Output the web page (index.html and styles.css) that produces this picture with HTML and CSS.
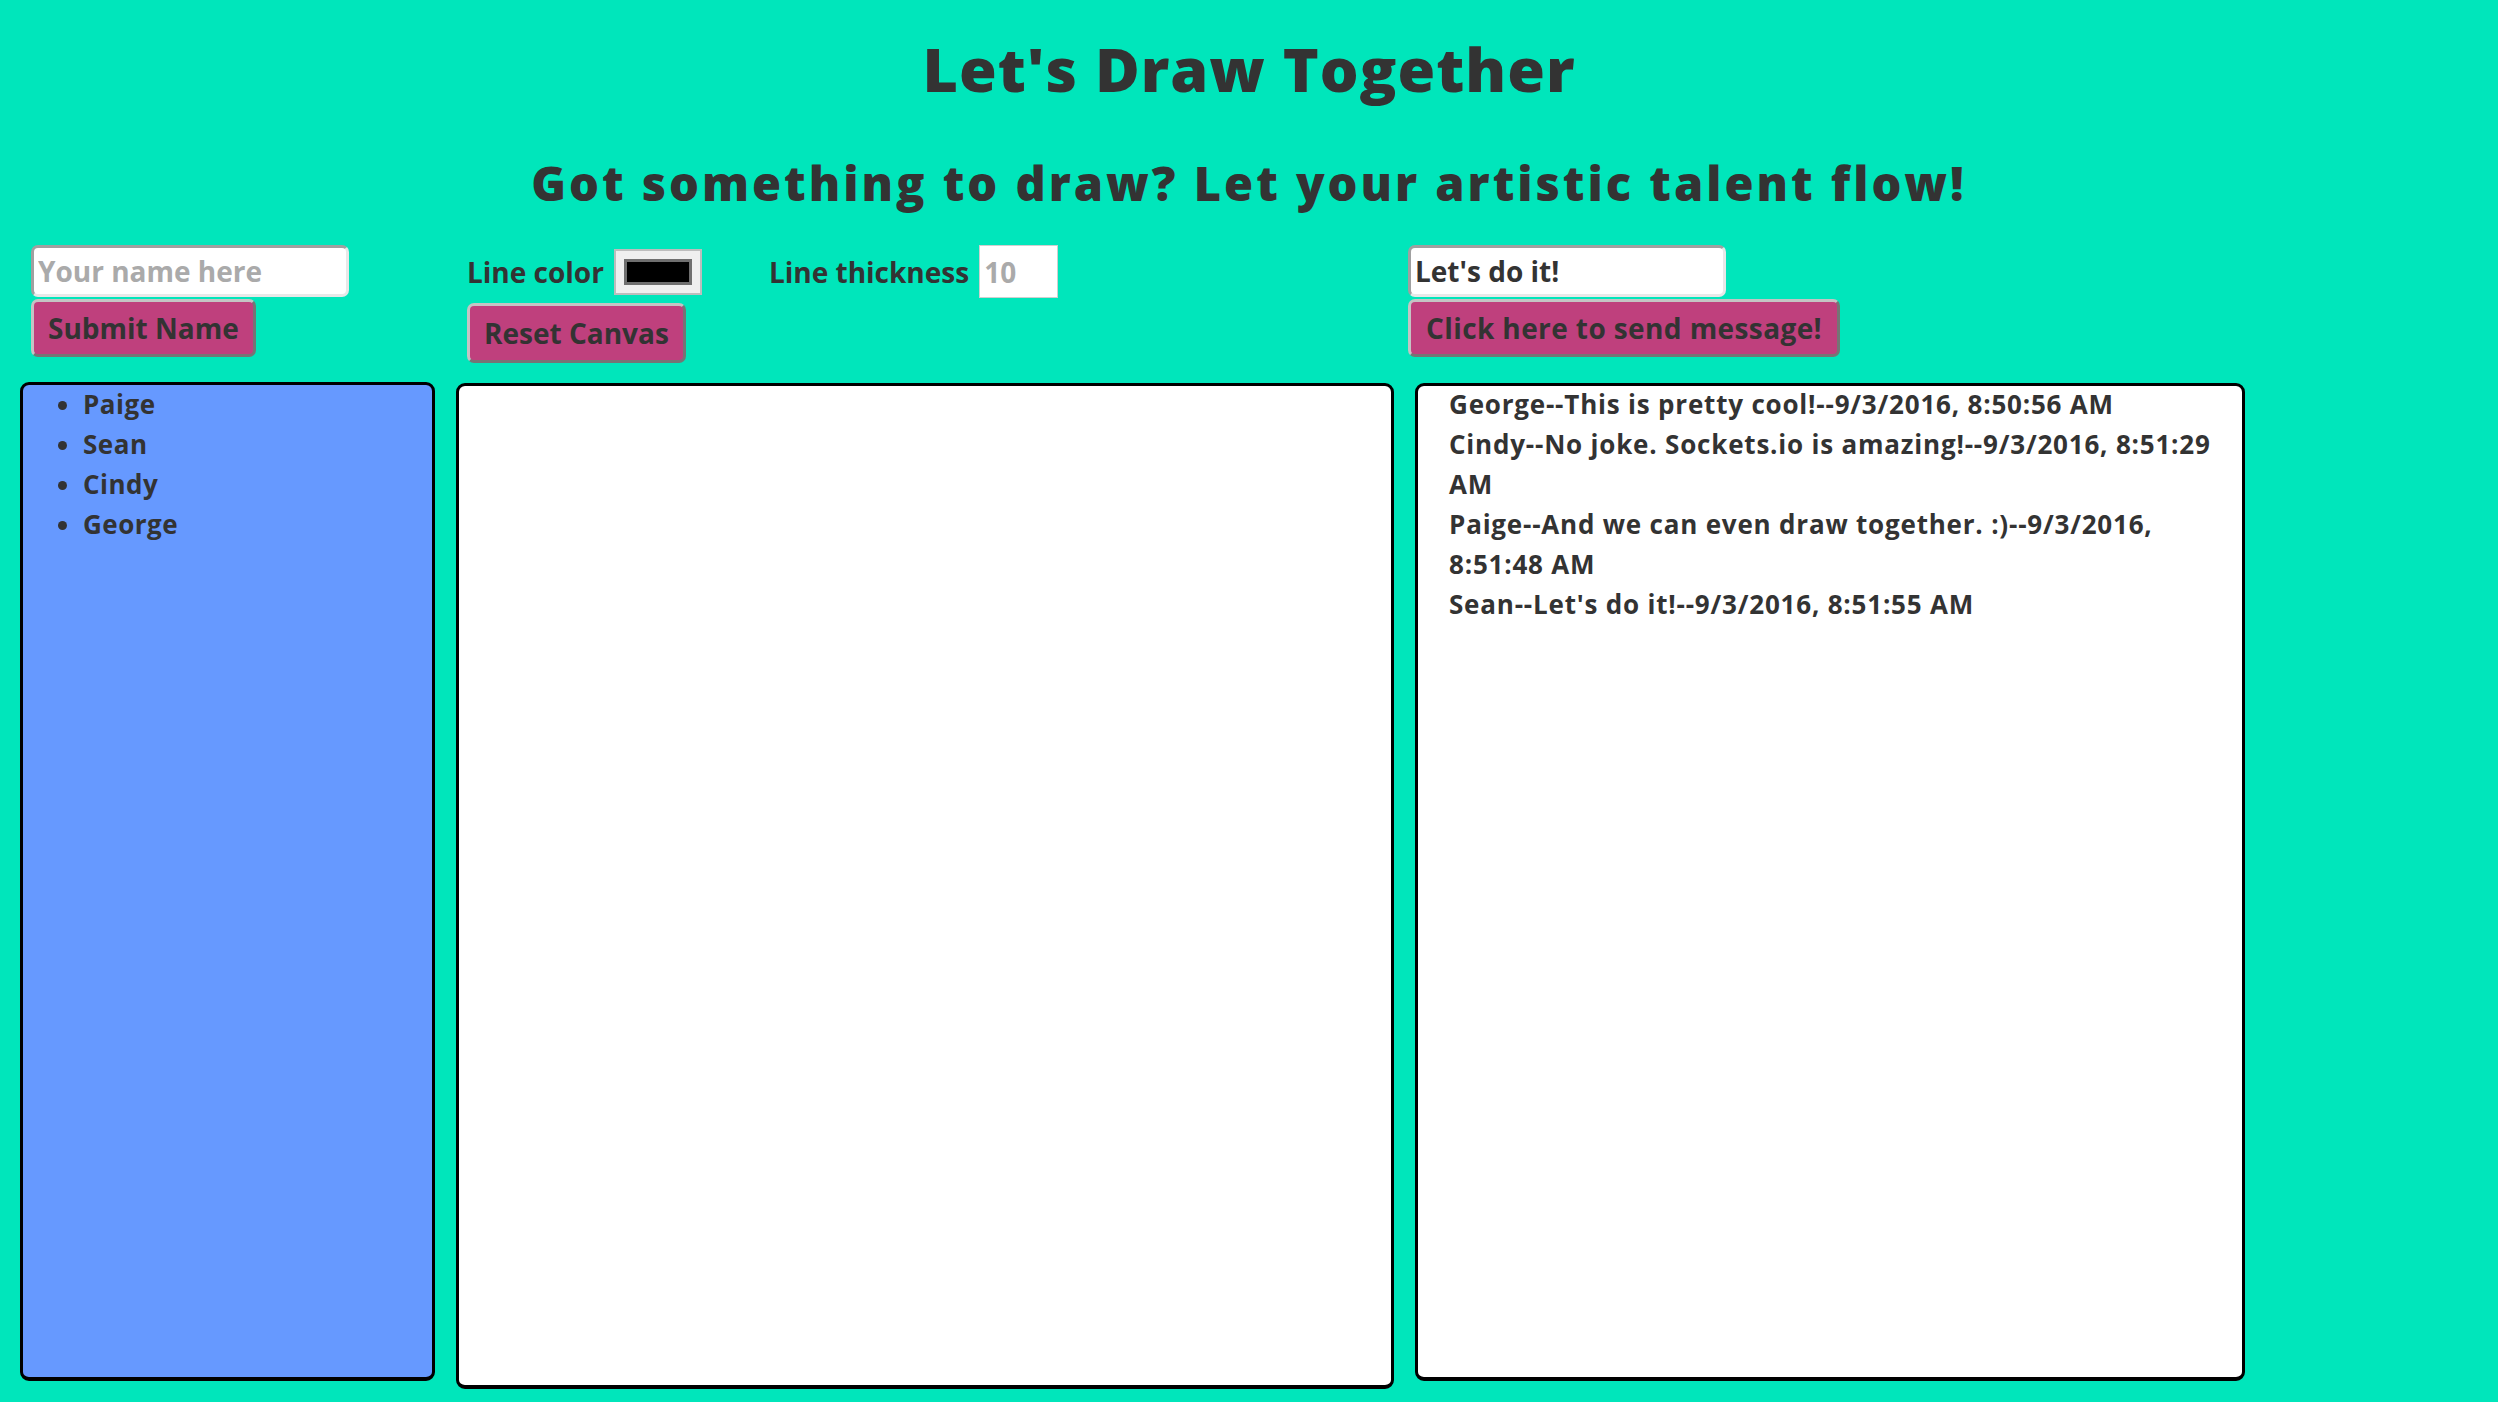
FILE: index.html
```html
<!DOCTYPE html>
<html lang="en">
<head>
<meta charset="utf-8">
<title>Let's Draw Together</title>
<link rel="stylesheet" href="styles.css">
</head>
<body>
<h1 class="title">Let's Draw Together</h1>
<h2 class="subtitle">Got something to draw? Let your artistic talent flow!</h2>
<main class="board">
  <div class="controls controls-name">
    <input class="text-input" type="text" placeholder="Your name here">
    <button class="btn">Submit Name</button>
  </div>
  <div class="controls controls-canvas">
    <div class="tool-row">
      <label class="tool-label">Line color</label>
      <input class="color-input" type="color" value="#000000">
      <label class="tool-label tool-gap">Line thickness</label>
      <input class="number-input" type="number" placeholder="10">
    </div>
    <button class="btn btn-reset">Reset Canvas</button>
  </div>
  <div class="controls controls-chat">
    <input class="text-input" type="text" value="Let's do it!">
    <button class="btn btn-send">Click here to send message!</button>
  </div>

  <section class="panel users">
    <ul class="user-list">
      <li>Paige</li>
      <li>Sean</li>
      <li>Cindy</li>
      <li>George</li>
    </ul>
  </section>
  <section class="panel canvas"></section>
  <section class="panel chat">
    <ul class="messages">
      <li>George--This is pretty cool!--9/3/2016, 8:50:56 AM</li>
      <li>Cindy--No joke. Sockets.io is amazing!--9/3/2016, 8:51:29 AM</li>
      <li>Paige--And we can even draw together. :)--9/3/2016, 8:51:48 AM</li>
      <li>Sean--Let's do it!--9/3/2016, 8:51:55 AM</li>
    </ul>
  </section>
</main>
</body>
</html>
```
FILE: styles.css
```css
html, body {
  margin: 0;
  padding: 0;
}
body {
  background: #00e6bb;
  color: #333333;
  font-family: "Open Sans", "Liberation Sans", sans-serif;
  font-weight: 700;
  padding: 0 20px;
}
.title {
  margin: 38px 0 0;
  font-family: "Open Sans", sans-serif;
  font-weight: 800;
  font-size: 61px;
  line-height: 1;
  text-align: center;
  letter-spacing: 1px;
}
.subtitle {
  margin: 61px 0 0;
  font-family: "Open Sans", sans-serif;
  font-weight: 800;
  font-size: 47px;
  line-height: 1;
  text-align: center;
  letter-spacing: 3px;
}
.board {
  margin-top: 38px;
  display: grid;
  grid-template-columns: 415px 938px 830px;
  grid-template-rows: 116px auto;
  column-gap: 21px;
  row-gap: 21px;
  align-items: start;
}
.controls {
  display: flex;
  flex-direction: column;
  align-items: flex-start;
  gap: 2px;
}
.controls-name { margin-left: 11px; }
.controls-canvas { margin-left: 11px; gap: 5px; }
.controls-chat { margin-left: -7px; }

.text-input {
  box-sizing: border-box;
  width: 318px;
  height: 52px;
  border: 3px solid;
  border-color: #a0a0a0 #e8e8e8 #e8e8e8 #a0a0a0;
  border-radius: 7px;
  background: #ffffff;
  font-family: inherit;
  font-weight: 700;
  font-size: 28px;
  color: #333333;
  padding: 0 4px;
}
.text-input::placeholder { color: #aaaaaa; }

.btn {
  box-sizing: border-box;
  height: 58px;
  padding: 0 14px;
  border: 3px solid;
  border-color: #c4c4c4 #757575 #757575 #c4c4c4;
  border-radius: 7px;
  background: #bf407d;
  color: #333333;
  font-family: inherit;
  font-weight: 700;
  font-size: 28px;
}
.btn-reset { height: 60px; }
.btn-send { letter-spacing: 0.4px; padding: 0 15px; }

.tool-row {
  display: flex;
  align-items: center;
  height: 53px;
}
.tool-label {
  font-size: 28px;
  font-weight: 700;
  margin-right: 10px;
}
.tool-gap { margin-left: 67px; }
.color-input {
  box-sizing: border-box;
  width: 88px;
  height: 46px;
  margin: 0;
  padding: 8px;
  border: 2px solid #bdbdbd;
  background: #efefef;
  -webkit-appearance: none;
  appearance: none;
}
.color-input::-webkit-color-swatch-wrapper { padding: 0; }
.color-input::-webkit-color-swatch { border: 3px solid #6f6f6f; border-radius: 0; }
.number-input {
  box-sizing: border-box;
  width: 79px;
  height: 53px;
  margin: 0;
  border: 1px solid #cfcfcf;
  background: #ffffff;
  font-family: inherit;
  font-weight: 700;
  font-size: 28px;
  padding: 0 4px;
  color: #333333;
}
.number-input::placeholder { color: #aaaaaa; }
.number-input::-webkit-inner-spin-button,
.number-input::-webkit-outer-spin-button { -webkit-appearance: none; margin: 0; }

.panel {
  box-sizing: border-box;
  border: 3px solid #000000;
  border-bottom-width: 4px;
  border-radius: 9px;
  font-size: 26px;
  line-height: 40px;
}
.users {
  height: 999px;
  background: #6699ff;
}
.canvas {
  margin-top: 1px;
  height: 1006px;
  background: #ffffff;
}
.chat {
  margin-top: 1px;
  height: 998px;
  background: #ffffff;
}
.user-list {
  margin: -1px 0 0;
  padding-left: 60px;
  letter-spacing: 0.5px;
}
.messages {
  list-style: none;
  margin: -2px 0 0;
  padding: 0 0 0 31px;
  width: 762px;
  letter-spacing: 0.8px;
}
```
